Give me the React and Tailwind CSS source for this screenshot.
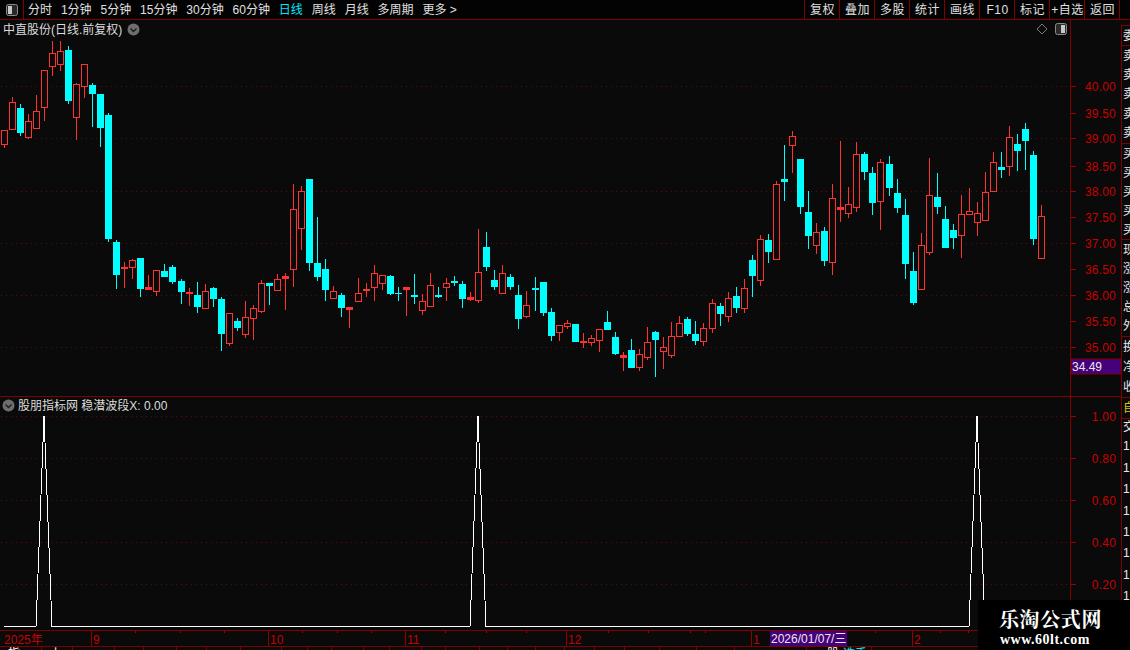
const FONT = "font-['Liberation_Sans','Noto_Sans_CJK_SC',sans-serif]"

const periods = ['分时', '1分钟', '5分钟', '15分钟', '30分钟', '60分钟', '日线', '周线', '月线', '多周期', '更多 >']
const tools = ['复权', '叠加', '多股', '统计', '画线', 'F10', '标记', '+自选', '返回']

// r = up (hollow red), c = down (solid cyan): [type, bodyTop, bodyBottom, wickTop, wickBottom]
const candles = [
  ['r', 130, 145, 130, 148], ['r', 102, 130, 97, 130], ['c', 108, 133, 104, 136], ['r', 121, 138, 114, 139],
  ['r', 111, 129, 95, 129], ['r', 70, 108, 70, 121], ['r', 53, 67, 41, 76], ['r', 51, 65, 41, 71],
  ['c', 50, 101, 46, 104], ['r', 84, 118, 83, 140], ['r', 64, 87, 64, 98], ['c', 85, 94, 83, 127],
  ['c', 94, 128, 94, 147], ['c', 115, 239, 113, 242], ['c', 242, 275, 240, 289], ['r', 267, 269, 262, 288],
  ['r', 260, 268, 259, 279], ['c', 258, 289, 258, 297], ['r', 287, 290, 275, 290], ['r', 270, 292, 270, 296],
  ['c', 271, 277, 264, 277], ['c', 267, 282, 265, 284], ['c', 281, 292, 279, 304], ['r', 292, 294, 288, 306],
  ['c', 295, 307, 282, 313], ['r', 291, 309, 284, 309], ['c', 288, 299, 287, 307], ['c', 299, 334, 297, 351],
  ['r', 313, 344, 313, 346], ['c', 321, 328, 318, 331], ['r', 317, 335, 301, 338], ['r', 308, 319, 305, 340],
  ['r', 283, 312, 280, 313], ['c', 283, 286, 283, 305], ['r', 279, 291, 274, 291], ['r', 276, 279, 273, 310],
  ['r', 209, 270, 184, 287], ['r', 191, 229, 186, 250], ['c', 179, 263, 179, 271], ['c', 263, 277, 217, 281],
  ['c', 269, 290, 259, 301], ['r', 291, 299, 286, 299], ['c', 295, 308, 293, 317], ['r', 307, 310, 307, 328],
  ['r', 293, 302, 278, 302], ['r', 289, 291, 283, 297], ['r', 273, 288, 265, 301], ['r', 275, 284, 275, 290],
  ['c', 276, 294, 275, 295], ['c', 293, 294, 287, 301], ['r', 287, 290, 287, 316], ['c', 295, 297, 274, 304],
  ['r', 301, 311, 294, 315], ['r', 285, 307, 273, 307], ['c', 295, 297, 287, 298], ['r', 283, 288, 278, 301],
  ['c', 281, 283, 276, 286], ['c', 284, 299, 281, 308], ['r', 297, 300, 292, 301], ['r', 272, 301, 229, 303],
  ['c', 247, 267, 232, 271], ['c', 280, 287, 270, 290], ['r', 273, 294, 265, 294], ['c', 277, 287, 274, 290],
  ['c', 295, 319, 285, 329], ['r', 305, 317, 291, 318], ['c', 288, 290, 277, 311], ['c', 282, 313, 282, 316],
  ['c', 312, 336, 308, 341], ['r', 325, 333, 325, 341], ['r', 323, 327, 320, 329], ['c', 324, 342, 324, 342],
  ['r', 341, 343, 333, 348], ['r', 338, 343, 335, 346], ['r', 329, 341, 329, 352], ['c', 322, 330, 311, 330],
  ['c', 337, 354, 332, 355], ['r', 355, 358, 352, 371], ['c', 350, 368, 339, 368], ['r', 354, 368, 349, 371],
  ['r', 342, 358, 327, 360], ['c', 332, 340, 331, 377], ['r', 347, 352, 337, 369], ['r', 336, 356, 322, 358],
  ['r', 323, 337, 316, 337], ['c', 319, 334, 317, 336], ['c', 334, 341, 321, 345], ['r', 328, 342, 323, 346],
  ['r', 303, 329, 299, 333], ['c', 306, 314, 303, 326], ['r', 298, 317, 292, 322], ['c', 296, 308, 287, 313],
  ['r', 288, 309, 279, 313], ['c', 260, 276, 255, 297], ['r', 239, 281, 235, 286], ['c', 240, 252, 234, 263],
  ['r', 184, 260, 181, 260], ['c', 179, 182, 145, 201], ['r', 136, 146, 131, 173], ['c', 159, 207, 159, 214],
  ['c', 212, 236, 191, 249], ['r', 232, 246, 223, 254], ['c', 231, 261, 227, 266], ['r', 198, 263, 184, 275],
  ['r', 207, 210, 141, 222], ['r', 204, 214, 187, 218], ['r', 154, 208, 142, 212], ['c', 154, 172, 152, 180],
  ['c', 173, 203, 167, 215], ['r', 162, 202, 159, 230], ['c', 164, 188, 156, 196], ['c', 193, 208, 179, 213],
  ['c', 215, 264, 199, 279], ['c', 271, 303, 252, 305], ['r', 245, 290, 233, 290], ['r', 195, 253, 158, 255],
  ['c', 197, 207, 173, 214], ['c', 219, 248, 206, 248], ['c', 230, 238, 224, 249], ['r', 214, 236, 195, 258],
  ['r', 211, 215, 188, 215], ['r', 213, 223, 202, 236], ['r', 192, 221, 172, 221], ['r', 162, 192, 152, 192],
  ['c', 167, 170, 152, 178], ['r', 137, 167, 126, 176], ['c', 144, 151, 134, 171], ['c', 129, 141, 123, 170],
  ['c', 155, 239, 151, 245], ['r', 216, 259, 205, 259],
]

const priceRows = [
  ['40.00', 86], ['39.50', 113], ['39.00', 138], ['38.50', 166], ['38.00', 191], ['37.50', 217],
  ['37.00', 243], ['36.50', 269], ['36.00', 295], ['35.50', 321], ['35.00', 347],
]
const lowerRows = [['1.00', 416], ['0.80', 458], ['0.60', 500], ['0.40', 542], ['0.20', 584]]
const gridPrice = [86, 138, 191, 243, 295, 347]
const peaks = [44, 478, 977]

const monthMarks = [['2025年', 0], ['9', 91], ['10', 268], ['11', 405], ['12', 566], ['1', 751], ['2', 912]]
const minorTicks = [135, 180, 224, 302, 337, 371, 445, 486, 526, 608, 648, 690, 705, 790, 875, 940, 968]

const sideRows = [
  { text: ['委'], h: 'h-5' },
  { text: ['卖', '卖', '卖', '卖', '卖'], h: 'h-[98px]' },
  { text: ['买', '买', '买', '买', '买'], h: 'h-[96px]' },
  { text: ['现', '涨', '涨', '总', '外'], h: 'h-[97px]' },
  { text: ['换', '净', '收'], h: 'h-[61px]' },
  { text: ['自'], h: 'h-[21px]', color: 'text-[#d8c800]' },
  { text: ['交', '1', '1', '1', '1', '1', '1', '1', '1', '1', '1'], h: 'flex-1' },
]

const statusCells = [
  [42, '指'], [73, '上'], [115], [144], [177], [207], [241], [282], [308], [332], [364], [390], [422], [446],
  [480], [508], [536], [565], [595], [625], [660], [697], [735], [807],
]

const ToggleIcon = ({ side }) => (
  <svg width="12" height="12" viewBox="0 0 12 12" className="block">
    <rect x="0.5" y="0.5" width="11" height="11" rx="2" fill="#2a2a2a" stroke="#8a8a8a" />
    {side === 'left' ? <rect x="2" y="2" width="4" height="8" fill="#c8c8c8" /> : <rect x="6" y="2" width="4" height="8" fill="#c8c8c8" />}
  </svg>
)

const ChevronDot = () => (
  <svg width="13" height="13" viewBox="0 0 13 13" className="block shrink-0">
    <circle cx="6.5" cy="6.5" r="6" fill="#6e6e6e" />
    <path d="M3.5 5.5 L6.5 8.5 L9.5 5.5" fill="none" stroke="#1c1c1c" strokeWidth="1.4" />
  </svg>
)

const GridLine = ({ y, color = '#5c0c0c' }) => (
  <line x1="1" x2="1068" y1={y + 0.5} y2={y + 0.5} stroke={color} strokeDasharray="1 4" />
)

const Candle = ({ c, i }) => {
  const [type, top, bottom, hi, lo] = c
  const x = 4 + 8 * i + Math.floor(i / 22)
  const color = type === 'r' ? '#ff3232' : '#00ffff'
  const thin = bottom - top <= 3
  return (
    <g>
      <rect x={x} y={hi} width="1" height={lo - hi} fill={color} />
      {type === 'c' || thin ? (
        <rect x={x - 3} y={top} width="7" height={bottom - top} fill={color} />
      ) : (
        <rect x={x - 2.5} y={top + 0.5} width="6" height={bottom - top - 1} fill="#0a0a0a" stroke={color} />
      )}
    </g>
  )
}

const PricePlot = () => (
  <svg width="1070" height="376" viewBox="0 20 1070 376" shapeRendering="crispEdges" className="block">
    {gridPrice.map(y => <GridLine key={y} y={y} />)}
    {candles.map((c, i) => <Candle key={i} c={c} i={i} />)}
  </svg>
)

const wavePoints = () => {
  const pts = ['4,626.5']
  peaks.forEach(p => pts.push(`${p - 8},626.5`, `${p},416`, `${p + 8},626.5`))
  pts.push('1069,626.5')
  return pts.join(' ')
}

const LowerPlot = () => (
  <svg width="1070" height="233" viewBox="0 397 1070 233" shapeRendering="crispEdges" className="block">
    {lowerRows.map(r => <GridLine key={r[1]} y={r[1]} />)}
    <polyline points={wavePoints()} fill="none" stroke="#ffffff" strokeWidth="1" />
  </svg>
)

const Axis = ({ rows, top, height, children }) => (
  <svg width="50" height={height} viewBox={`0 ${top} 50 ${height}`} className="block">
    {rows.map(([label, y]) => (
      <g key={label}>
        <rect x="0" y={y} width="5" height="1" fill="#a00000" />
        <text x="45" y={y + 5} textAnchor="end" fontSize="12" letterSpacing="0.2" fill="#c80000">{label}</text>
      </g>
    ))}
    {children}
  </svg>
)

const TimeAxis = () => (
  <svg width="1121" height="15" viewBox="0 0 1121 15" className="block">
    {minorTicks.map(x => <rect key={x} x={x} y="0" width="1" height="2" fill="#a00000" />)}
    {monthMarks.map(([label, x]) => (
      <g key={label}>
        {x > 0 && <rect x={x} y="0" width="1" height="15" fill="#900000" />}
        <text x={x > 0 ? x + 2 : 4} y="13" fontSize="12" fill="#c80000">{label}</text>
      </g>
    ))}
  </svg>
)

export default function App() {
  return (
    <div className={`relative w-[1130px] h-[650px] overflow-hidden bg-[#0a0a0a] text-[12px] ${FONT}`}>
      {/* top bar */}
      <div className="flex items-center h-5 bg-[#030303] border-b border-[#800000] text-[#e0e0e0]">
        <div className="flex items-center justify-center w-6 h-full border-r border-[#800000]">
          <ToggleIcon side="left" />
        </div>
        <div className="flex items-center gap-[8.9px] pl-1">
          {periods.map(p => (
            <span key={p} className={p === '日线' ? 'text-[#00e8ff]' : ''}>{p}</span>
          ))}
        </div>
        <div className="flex ml-auto mr-[10px] h-full border-l border-[#800000]">
          {tools.map(t => (
            <span key={t} className="flex items-center justify-center w-[35px] pl-px border-r border-[#800000] tracking-[0.5px]">{t}</span>
          ))}
        </div>
      </div>

      <div className="flex">
        <div className="w-[1121px]">
          {/* price panel */}
          <div className="relative flex h-[377px] border-b border-[#800000]">
            <div className="w-[1070px]">
              <PricePlot />
            </div>
            <div className="w-[51px] border-l border-[#800000]">
              <Axis rows={priceRows} top={20} height={376}>
                <rect x="0" y="359" width="50" height="15" fill="#45007c" stroke="#800000" />
                <text x="1" y="371" fontSize="12" fill="#e8e8e8">34.49</text>
              </Axis>
            </div>
            <div className="absolute left-[3px] top-0 flex items-center gap-[5px] h-[19px] text-[#dcdcdc]">
              <span>中直股份(日线.前复权)</span>
              <ChevronDot />
            </div>
            <div className="absolute left-[1036px] top-[3px] flex items-center gap-[7px]">
              <svg width="12" height="12" viewBox="0 0 12 12" className="block">
                <path d="M6 1 L11 6 L6 11 L1 6 Z" fill="none" stroke="#7c7c7c" />
              </svg>
              <ToggleIcon side="right" />
            </div>
          </div>

          {/* indicator panel */}
          <div className="relative flex h-[234px] border-b border-[#800000]">
            <div className="w-[1070px]">
              <LowerPlot />
            </div>
            <div className="w-[51px] border-l border-[#800000]">
              <Axis rows={lowerRows} top={397} height={233} />
            </div>
            <div className="absolute left-[2px] top-[1px] flex items-center gap-[3px] h-[15px] text-[#dcdcdc]">
              <ChevronDot />
              <span>股朋指标网 稳潜波段X: 0.00</span>
            </div>
          </div>

          {/* time axis */}
          <div className="relative h-4 border-b border-[#800000]">
            <TimeAxis />
            <div className="absolute left-[770px] top-0 flex items-center h-[15px] px-px bg-[#45007c] text-[#e8e8e8]">
              2026/01/07/三
            </div>
          </div>

          {/* status bar, only its top edge is on screen */}
          <div className="flex h-[3px] overflow-hidden leading-[14px] text-white">
            {statusCells.map(([end, label], i) => {
              const start = i === 0 ? 0 : statusCells[i - 1][0]
              return (
                <div key={end} className="pl-2 border-r border-[#800000] whitespace-nowrap" style={{ width: end - start }}>
                  {label}
                </div>
              )
            })}
            <div className="flex w-[65px] pl-[20px] border-r border-[#800000]">
              <span>股</span>
              <span className="ml-1 text-[#00e8ff]">选手</span>
            </div>
          </div>
        </div>

        {/* clipped side panel */}
        <div className="w-[9px] pt-[5px]">
          <div className="flex flex-col h-[625px] border-l border-[#800000] text-[#e8e8e8]">
            {sideRows.map((group, i) => (
              <div key={i} className={`${group.h} ${group.color || ''} flex flex-col justify-around overflow-hidden border-t border-[#800000] pl-px leading-[14px]`}>
                {group.text.map((t, j) => (
                  <span key={j} className={t === '1' ? 'py-[2.5px]' : ''}>{t}</span>
                ))}
              </div>
            ))}
          </div>
        </div>
      </div>

      {/* watermark */}
      <div className="absolute right-0 bottom-0 flex flex-col w-[152px] h-[50px] pt-2 pl-[21px] bg-black text-white font-['Liberation_Serif','Noto_Serif_CJK_SC','Noto_Sans_CJK_SC',serif] font-bold">
        <span className="text-[20px] leading-[24px] tracking-[0.6px]">乐淘公式网</span>
        <span className="text-[14px] leading-[16px] tracking-[0.5px] pl-[1px]">www.60lt.com</span>
      </div>
    </div>
  )
}
